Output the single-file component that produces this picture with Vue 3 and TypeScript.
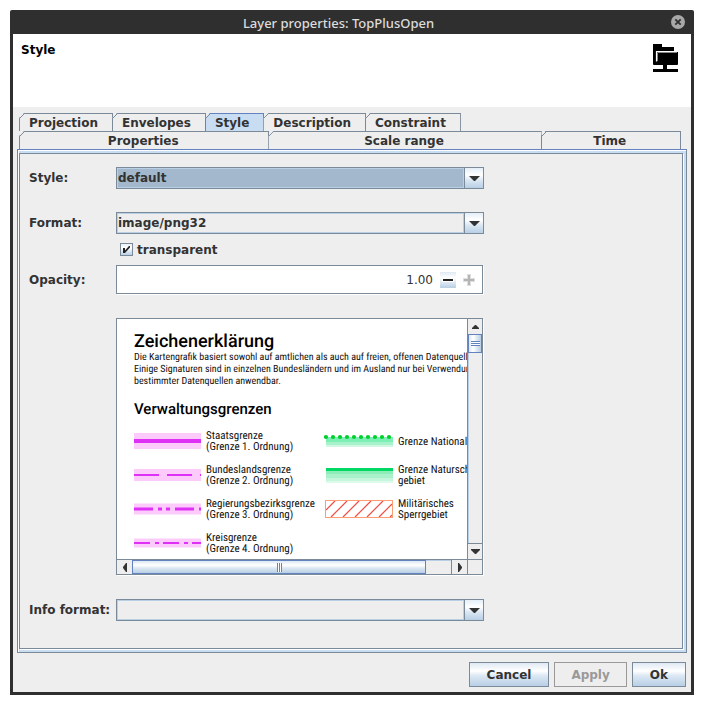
<script setup lang="ts">
import { ref } from 'vue'

type Tab = { id: string; label: string; share: number }

const upperTabs: Tab[] = [
  { id: 'projection', label: 'Projection', share: 0 },
  { id: 'envelopes', label: 'Envelopes', share: 0 },
  { id: 'style', label: 'Style', share: 0 },
  { id: 'description', label: 'Description', share: 0 },
  { id: 'constraint', label: 'Constraint', share: 0 },
]
const lowerTabs: Tab[] = [
  { id: 'properties', label: 'Properties', share: 251 },
  { id: 'scale', label: 'Scale range', share: 274 },
  { id: 'time', label: 'Time', share: 139 },
]
const active = ref('style')
const layerStyle = ref('default')
const format = ref('image/png32')
const infoFormat = ref('')
const transparent = ref(true)
const opacity = ref('1.00')

function step(by: number) {
  const next = Math.min(1, Math.max(0, Number(opacity.value) + by))
  opacity.value = next.toFixed(2)
}

const borders = [
  { name: 'Staatsgrenze', order: 1, band: 16, line: 4, dash: 'none' },
  { name: 'Bundeslandsgrenze', order: 2, band: 12, line: 2, dash: '25 8' },
  { name: 'Regierungsbezirksgrenze', order: 3, band: 11, line: 3, dash: '19 5 4 4 4 5' },
  { name: 'Kreisgrenze', order: 4, band: 9, line: 2, dash: '16 5 4 4' },
]
</script>

<template>
  <main class="window">
    <header class="titlebar">
      <h1>Layer properties: TopPlusOpen</h1>
      <button class="close" type="button" aria-label="Close">
        <svg width="14" height="14" viewBox="0 0 14 14">
          <circle cx="7" cy="7" r="7" fill="#a8a8a8" />
          <path d="M4.3 4.3l5.4 5.4M9.7 4.3l-5.4 5.4" stroke="#303030" stroke-width="1.8" />
        </svg>
      </button>
    </header>

    <section class="banner">
      <h2>Style</h2>
      <svg class="layer-icon" width="25" height="28" viewBox="0 0 25 28">
        <path d="M0 0h9v3h12v4h3q1 0 1 1v12q0 1-1 1H14v4h11v3H0v-3h10v-4H1q-1 0-1-1z" fill="#000" />
        <path d="M21 2h4v5.500h-4z" fill="#fff" />
        <path d="M3.500 17.500V7.500H25" fill="none" stroke="#fff" stroke-width="1.200" />
        <path d="M4.500 17V8.500H24" fill="none" stroke="#888" stroke-width="1" />
      </svg>
    </section>

    <div class="body">
      <nav class="tabs" role="tablist">
        <div class="tab-row">
          <button
            v-for="t in upperTabs" :key="t.id" type="button" role="tab"
            class="tab" :class="{ active: active === t.id }" :aria-selected="active === t.id"
            @click="active = t.id"
          >{{ t.label }}</button>
        </div>
        <div class="tab-row lower">
          <button
            v-for="t in lowerTabs" :key="t.id" type="button" role="tab"
            class="tab" :class="{ active: active === t.id }" :aria-selected="active === t.id"
            :style="{ flexGrow: t.share }" @click="active = t.id"
          >{{ t.label }}</button>
        </div>
      </nav>

      <div class="panel">
        <form class="form" @submit.prevent>
          <label for="style">Style:</label>
          <div class="combo focused">
            <select id="style" v-model="layerStyle"><option>default</option></select>
            <svg class="arrow" viewBox="0 0 18 20"><path d="M4 8h11l-5 5H9z" fill="#333" /></svg>
          </div>

          <label for="format" class="gap-l">Format:</label>
          <div class="combo gap-l">
            <select id="format" v-model="format"><option>image/png32</option></select>
            <svg class="arrow" viewBox="0 0 18 20"><path d="M4 8h11l-5 5H9z" fill="#333" /></svg>
          </div>

          <label class="check">
            <span class="box">
              <input v-model="transparent" type="checkbox" />
              <svg v-if="transparent" width="13" height="13" viewBox="0 0 13 13">
                <path d="M3 5h2v2.500L9 3h1v1.500L5 10H3z" fill="#222" />
              </svg>
            </span>
            transparent
          </label>

          <label for="opacity">Opacity:</label>
          <div class="spinner">
            <input id="opacity" v-model="opacity" type="text" />
            <button type="button" class="minus" aria-label="Decrease" @click="step(-0.1)">
              <svg width="16" height="16" viewBox="0 0 16 16">
                <path d="M2 6h12v4H2z" fill="#fff" /><path d="M3 7h10v2H3z" fill="#222" />
              </svg>
            </button>
            <button type="button" class="plus" aria-label="Increase" @click="step(0.1)">
              <svg width="16" height="16" viewBox="0 0 16 16">
                <path d="M6 2h4v4h4v4h-4v4H6v-4H2V6h4z" fill="#dedede" />
                <path d="M7 3h2v4h4v2H9v4H7V9H3V7h4z" fill="#b4b4b4" />
              </svg>
            </button>
          </div>

          <div class="scrollpane">
            <div class="view">
              <h3>Zeichenerklärung</h3>
              <p>
                Die Kartengrafik basiert sowohl auf amtlichen als auch auf freien, offenen Datenquellen<br />
                Einige Signaturen sind in einzelnen Bundesländern und im Ausland nur bei Verwendung<br />
                bestimmter Datenquellen anwendbar.
              </p>
              <h4>Verwaltungsgrenzen</h4>
              <div class="legend">
                <ul>
                  <li v-for="b in borders" :key="b.order">
                    <svg width="67" height="22" viewBox="0 0 67 22">
                      <rect x="0" :y="11 - b.band / 2" width="67" :height="b.band" fill="#fccbfc" />
                      <path d="M0 11h67" stroke="#df30f5" :stroke-width="b.line" :stroke-dasharray="b.dash" />
                    </svg>
                    <span>{{ b.name }}<br />(Grenze {{ b.order }}. Ordnung)</span>
                  </li>
                </ul>
                <ul class="areas">
                  <li>
                    <svg width="69" height="22" viewBox="0 0 69 22">
                      <path d="M2 7h67v5H2z" fill="#7deeb4" />
                      <path d="M2 12h67v3H2z" fill="#a5f2cb" />
                      <path d="M2 15h67v2H2z" fill="#d2f8e4" />
                      <path d="M2 7h64" stroke="#00cf2c" stroke-width="4.200" stroke-linecap="round" stroke-dasharray="0 7" />
                    </svg>
                    <span>Grenze National</span>
                  </li>
                  <li>
                    <svg width="69" height="22" viewBox="0 0 69 22">
                      <path d="M2 7h67v3H2z" fill="#8eecb9" />
                      <path d="M2 10h67v4H2z" fill="#a9f1cb" />
                      <path d="M2 14h67v3H2z" fill="#c5f6dc" />
                      <path d="M2 17h67v2H2z" fill="#ddfaeb" />
                      <path d="M2 4h67v3H2z" fill="#00d864" />
                    </svg>
                    <span>Grenze Natursch<br />gebiet</span>
                  </li>
                  <li>
                    <svg width="69" height="22" viewBox="0 0 69 22">
                      <path
                        d="M2 12l9-9M7 19L23 3M19 19L35 3M31 19L47 3M43 19L59 3M55 19L68 6M66 19l2-2"
                        stroke="#f34d45" stroke-width="1.200"
                      />
                      <rect x="1.500" y="2.500" width="67" height="17" fill="none" stroke="#ff9c73" />
                    </svg>
                    <span>Militärisches<br />Sperrgebiet</span>
                  </li>
                </ul>
              </div>
            </div>
            <div class="bar vertical">
              <button type="button" aria-label="Scroll up">
                <svg width="7" height="4" viewBox="0 0 7 4"><path d="M3 0h1l3 3v1H0V3z" fill="#333" /></svg>
              </button>
              <div class="thumb"><i></i></div>
              <div class="track"></div>
              <button type="button" aria-label="Scroll down">
                <svg width="9" height="5" viewBox="0 0 9 5"><path d="M0 0h9v1L5 5H4L0 1z" fill="#333" /></svg>
              </button>
            </div>
            <div class="bar horizontal">
              <button type="button" aria-label="Scroll left">
                <svg width="4" height="9" viewBox="0 0 4 9"><path d="M4 0v9H3L0 5V4l3-4z" fill="#333" /></svg>
              </button>
              <div class="thumb"><i></i></div>
              <div class="track"></div>
              <button type="button" aria-label="Scroll right">
                <svg width="4" height="9" viewBox="0 0 4 9"><path d="M0 0v9h1l3-4V4L1 0z" fill="#333" /></svg>
              </button>
            </div>
            <div class="corner"></div>
          </div>

          <label for="info">Info format:</label>
          <div class="combo">
            <select id="info" v-model="infoFormat"><option value=""></option></select>
            <svg class="arrow" viewBox="0 0 18 20"><path d="M4 8h11l-5 5H9z" fill="#333" /></svg>
          </div>
        </form>
      </div>

      <footer class="actions">
        <button type="button">Cancel</button>
        <button type="button" disabled>Apply</button>
        <button type="button">Ok</button>
      </footer>
    </div>
  </main>
</template>

<style>
body {
  background: #fff;
}
</style>

<style scoped>
* {
  box-sizing: border-box;
}
.window {
  margin: 10px;
  border: 3px solid #2f2f2f;
  border-top: 0;
  border-radius: 2px 2px 0 0;
  background: #eee;
  color: #333;
  font: bold 12px/16px 'DejaVu Sans', sans-serif;
}
h1, h2, h3, h4, p, ul {
  margin: 0;
  padding: 0;
}
button, input, select {
  margin: 0;
  padding: 0;
  border: 0;
  border-radius: 0;
  appearance: none;
  background: none;
  color: inherit;
  font: inherit;
}
.titlebar {
  display: grid;
  grid-template-columns: 1fr 27px;
  align-items: end;
  height: 24px;
  background: #2f2f2f;
  color: #dcdcdc;
}
.titlebar h1 {
  font: 500 13px/22px 'Noto Sans', sans-serif;
  text-align: center;
}
.close {
  display: flex;
  place-self: center;
}
.banner {
  display: flex;
  justify-content: space-between;
  height: 73px;
  padding: 8px 13px 0 8px;
  background: #fff;
  color: #000;
}
.banner h2 {
  font: inherit;
}
.layer-icon {
  margin-top: 2px;
}
.body {
  padding: 6px 4px 5px;
}
.tabs {
  padding: 0 6px 0 2px;
}
.tab-row {
  display: flex;
}
.tab {
  height: 18px;
  margin-left: -1px;
  padding: 0 14px 0 9px;
  border: 1px solid #7a8a99;
  border-bottom: 0;
  background: linear-gradient(135deg, transparent 44%, #7a8a99 44%, #7a8a99 56%, transparent 56%) 0 0 / 6px 6px no-repeat border-box #eee;
  clip-path: polygon(5px 0, 100% 0, 100% 100%, 0 100%, 0 5px);
  white-space: nowrap;
}
.tab:first-child {
  margin-left: 0;
}
.lower .tab {
  flex-basis: 0;
  padding: 0 2px 0 0;
}
.tab.active {
  border-color: #6382bf;
  background-color: #c8ddf2;
}
.panel {
  padding: 3px 3px 3px 1px;
  border: 1px solid #6382bf;
  border-right-color: #7a8a99;
  border-bottom-color: #7a8a99;
  background: #c8ddf2;
  box-shadow: inset 1px 1px #fff;
}
.form {
  display: grid;
  grid-template-columns: 87px minmax(0, 368px);
  align-items: center;
  padding: 13px 9px 27px;
  border: 1px solid #7a8a99;
  background: #eee;
  box-shadow: 1px 1px #fff;
}
.gap-l {
  margin-top: 23px;
}
.combo {
  display: grid;
  grid-template-columns: minmax(0, 1fr) 19px;
  height: 22px;
  border: 1px solid #7a8a99;
}
.combo select {
  grid-area: 1 / 1;
  border: 1px solid #b8cfe5;
  outline: 0;
}
.focused select {
  background: #a3b8cc;
}
.arrow {
  width: 19px;
  height: 20px;
  border-left: 1px solid #7a8a99;
  background: linear-gradient(#e4eef8, #fff 35%, #dce8f3 60%, #b8cfe5);
  pointer-events: none;
}
.check {
  grid-column: 2;
  display: flex;
  align-items: center;
  gap: 4px;
  height: 31px;
  padding-left: 4px;
}
.box {
  display: grid;
  width: 13px;
  height: 13px;
}
.box > * {
  grid-area: 1 / 1;
}
.box input {
  width: 13px;
  height: 13px;
  border: 1px solid #7a8a99;
  background: linear-gradient(#e8f0f8, #fff 35%, #b8cfe5);
}
.box svg {
  pointer-events: none;
}
.spinner {
  display: flex;
  align-items: center;
  height: 29px;
  margin-right: 1px;
  padding-right: 5px;
  border: 1px solid #7a8a99;
  background: #fff;
  box-shadow: 1px 1px #fff;
}
.spinner input {
  flex: 1;
  min-width: 0;
  margin-right: 7px;
  font-weight: normal;
  text-align: right;
  outline: 0;
}
.spinner button {
  display: flex;
}
.minus {
  margin-right: 5px;
  background: linear-gradient(#dfe9f3, #fff 35%, #b8cfe5);
}
.scrollpane {
  grid-column: 2;
  display: grid;
  grid-template: 240px 15px / minmax(0, 1fr) 15px;
  margin: 24px 1px 24px 0;
  border: 1px solid #7a8a99;
  box-shadow: 1px 1px #fff;
}
.view {
  overflow: hidden;
  padding: 13px 0 0 17px;
  background: #fff;
  color: #111;
  font: 10px/12px 'Roboto Condensed', Roboto, sans-serif;
  text-rendering: geometricPrecision;
  white-space: nowrap;
}
.view h3 {
  color: #000;
  font: 500 18px/20px Roboto, sans-serif;
}
.view h4 {
  margin: 12px 0;
  color: #000;
  font: 500 15px/18px Roboto, sans-serif;
}
.legend {
  display: flex;
}
.legend ul {
  display: grid;
  gap: 12px;
  align-content: start;
  flex: 0 0 190px;
  list-style: none;
}
.legend li {
  display: flex;
  align-items: center;
  gap: 5px;
  height: 22px;
  font-size: 11px;
  line-height: 11px;
}
.legend svg {
  flex: none;
}
.bar {
  display: flex;
  background: #eee;
}
.bar button {
  display: flex;
  align-items: center;
  justify-content: center;
  flex: 0 0 15px;
}
.bar button:last-child {
  flex-basis: 16px;
}
.thumb {
  display: flex;
  align-items: center;
  justify-content: center;
  border: 1px solid #6382bf;
}
.track {
  flex: 1;
}
.vertical {
  flex-direction: column;
  border-left: 1px solid #7a8a99;
}
.vertical .thumb {
  flex: 0 0 19px;
  background: linear-gradient(90deg, #dce8f3, #fff 35%, #b8cfe5);
}
.vertical .thumb i {
  width: 9px;
  height: 5px;
  background: repeating-linear-gradient(#6382bf 0 1px, #fff 1px 2px);
}
.vertical .track {
  border-left: 1px solid #b8cfe5;
}
.vertical button:last-child {
  border-top: 1px solid #7a8a99;
}
.horizontal {
  border-top: 1px solid #7a8a99;
}
.horizontal .thumb {
  flex: 0 0 84%;
  background: linear-gradient(#dce8f3, #fff 35%, #dce8f3 60%, #b8cfe5);
}
.horizontal .thumb i {
  width: 5px;
  height: 9px;
  background: repeating-linear-gradient(90deg, #6382bf 0 1px, #fff 1px 2px);
}
.horizontal .track {
  border-top: 1px solid #b8cfe5;
}
.horizontal button:last-child {
  border-left: 1px solid #7a8a99;
}
.corner {
  border: solid #7a8a99;
  border-width: 1px 0 0 1px;
}
.actions {
  display: flex;
  justify-content: flex-end;
  gap: 5px;
  padding: 9px 1px 0 0;
}
.actions button {
  height: 25px;
  padding: 0 17px;
  border: 1px solid #7a8a99;
  background: linear-gradient(#dfe9f3, #fff 35%, #dce8f3 55%, #b8cfe5);
}
.actions button:disabled {
  padding: 0 16px;
  border-color: #999;
  background: #eee;
  color: #999;
}
</style>
